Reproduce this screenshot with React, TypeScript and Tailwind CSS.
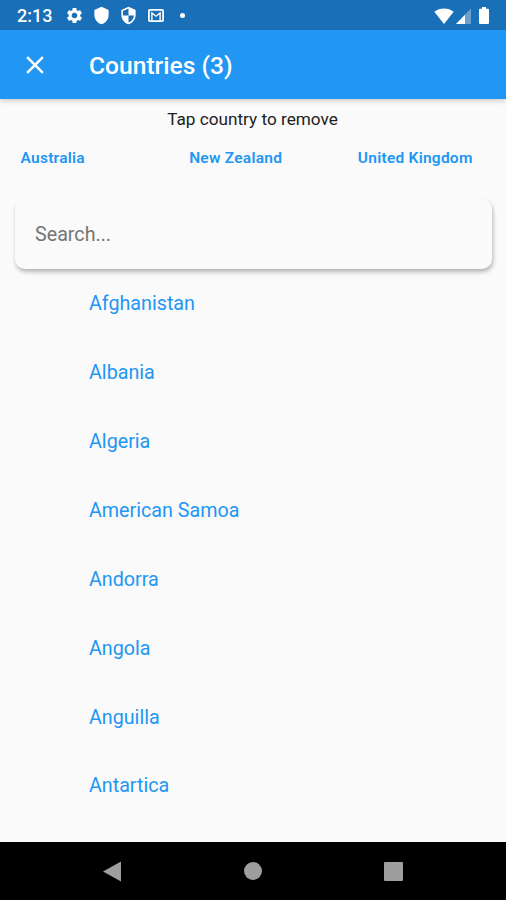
import { memo } from "react";
import { MdClose, MdSecurity, MdSettings, MdShield } from "react-icons/md";

const selected = ["Australia", "New Zealand", "United Kingdom"];

const countries = [
  "Afghanistan",
  "Albania",
  "Algeria",
  "American Samoa",
  "Andorra",
  "Angola",
  "Anguilla",
  "Antartica",
];

const StatusBar = memo(() => {
  return (
    <div className="flex h-[30px] shrink-0 items-center justify-between bg-[#1a70b8] pl-[17px] pr-[17px] pt-px text-white">
      <div className="flex items-center">
        <span className="w-[48px] text-[18px] font-medium leading-none">2:13</span>
        <MdSettings className="size-[19px]" />
        <MdShield className="ml-[8px] size-[19px]" />
        <MdSecurity className="ml-[8px] size-[19px]" />
        {/* Mail notification */}
        <svg viewBox="0 0 16 13" className="ml-[10px] h-[13px] w-[16px]">
          <rect x="0.9" y="0.9" width="14.2" height="11.2" rx="1" fill="none" stroke="white" strokeWidth="1.8" />
          <path d="M3.9 11.5V4L8 7.2L12.1 4v7.5" fill="none" stroke="white" strokeWidth="1.4" />
        </svg>
        <span className="ml-[16px] size-[5px] rounded-full bg-white" />
      </div>
      <div className="flex items-center">
        <svg viewBox="0 0 20 16" className="h-[16px] w-[20px]" fill="currentColor">
          <path d="M10 16L0.3 3.8C3 1.6 6.3 0.4 10 0.4s7 1.2 9.7 3.4z" />
        </svg>
        <svg viewBox="0 0 15 16" className="ml-[2px] h-[16px] w-[15px]" fill="currentColor">
          <path d="M15 0.5V16H0z" opacity="0.35" />
          <path d="M9 6.7V16H0z" />
        </svg>
        <svg viewBox="0 0 10 17" className="ml-[8px] h-[17px] w-[10px]" fill="currentColor">
          <path d="M3 0h4v1.8h2a1 1 0 0 1 1 1V16a1 1 0 0 1-1 1H1a1 1 0 0 1-1-1V2.8a1 1 0 0 1 1-1h2z" />
        </svg>
      </div>
    </div>
  );
});

const AppBar = ({ count }: { count: number }) => {
  return (
    <header className="z-10 flex h-[69px] shrink-0 items-center bg-[#2196f3] pl-[20px] text-white shadow-[0_2px_5px_rgba(0,0,0,0.18)]">
      <button type="button" aria-label="Close">
        <MdClose className="size-[30px]" />
      </button>
      <h1 className="ml-[39px] pt-[4px] text-[24.6px] font-medium leading-none">Countries ({count})</h1>
    </header>
  );
};

const NavigationBar = memo(() => {
  return (
    <nav className="flex h-[58px] shrink-0 items-center bg-black text-[#9e9e9e]">
      <svg viewBox="0 0 18 21" className="ml-[103px] h-[21px] w-[18px]" fill="currentColor">
        <path d="M18 0.5v20L0 10.5z" />
      </svg>
      <span className="ml-[123px] size-[18px] rounded-full bg-[#9e9e9e]" />
      <span className="ml-[122px] size-[19px] rounded-[1px] bg-[#9e9e9e]" />
    </nav>
  );
});

export default function App() {
  return (
    <div className="flex h-[900px] w-[506px] flex-col overflow-hidden bg-[#fafafa] font-['Roboto',sans-serif]">
      <StatusBar />
      <AppBar count={selected.length} />

      <main className="flex min-h-0 flex-1 flex-col">
        <p className="mt-[10px] pr-px text-center text-[17.2px] leading-[20px] text-[#212121]">
          Tap country to remove
        </p>
        <div className="mt-[19px] grid grid-cols-3 text-[15.5px] font-semibold leading-[20px] tracking-[0.25px] text-[#2196f3]">
          {selected.map((name) => (
            <button key={name} type="button" className="whitespace-nowrap pl-[20.5px] text-left">
              {name}
            </button>
          ))}
        </div>

        {/* Search card */}
        <div className="ml-[15px] mr-[14px] mt-[31px] flex h-[70px] shrink-0 items-center rounded-[10px] bg-[#fafafa] px-[20px] pt-[2px] shadow-[1px_3px_4px_rgba(0,0,0,0.28)]">
          <input
            type="text"
            placeholder="Search..."
            className="w-full bg-transparent text-[19.7px] text-[#212121] outline-none placeholder:text-[#757575]"
          />
        </div>

        <ul>
          {countries.map((name) => (
            <li key={name} className="flex h-[68.97px] items-center pl-[89px] text-[19.7px] text-[#2196f3]">
              {name}
            </li>
          ))}
        </ul>
      </main>

      <NavigationBar />
    </div>
  );
}
